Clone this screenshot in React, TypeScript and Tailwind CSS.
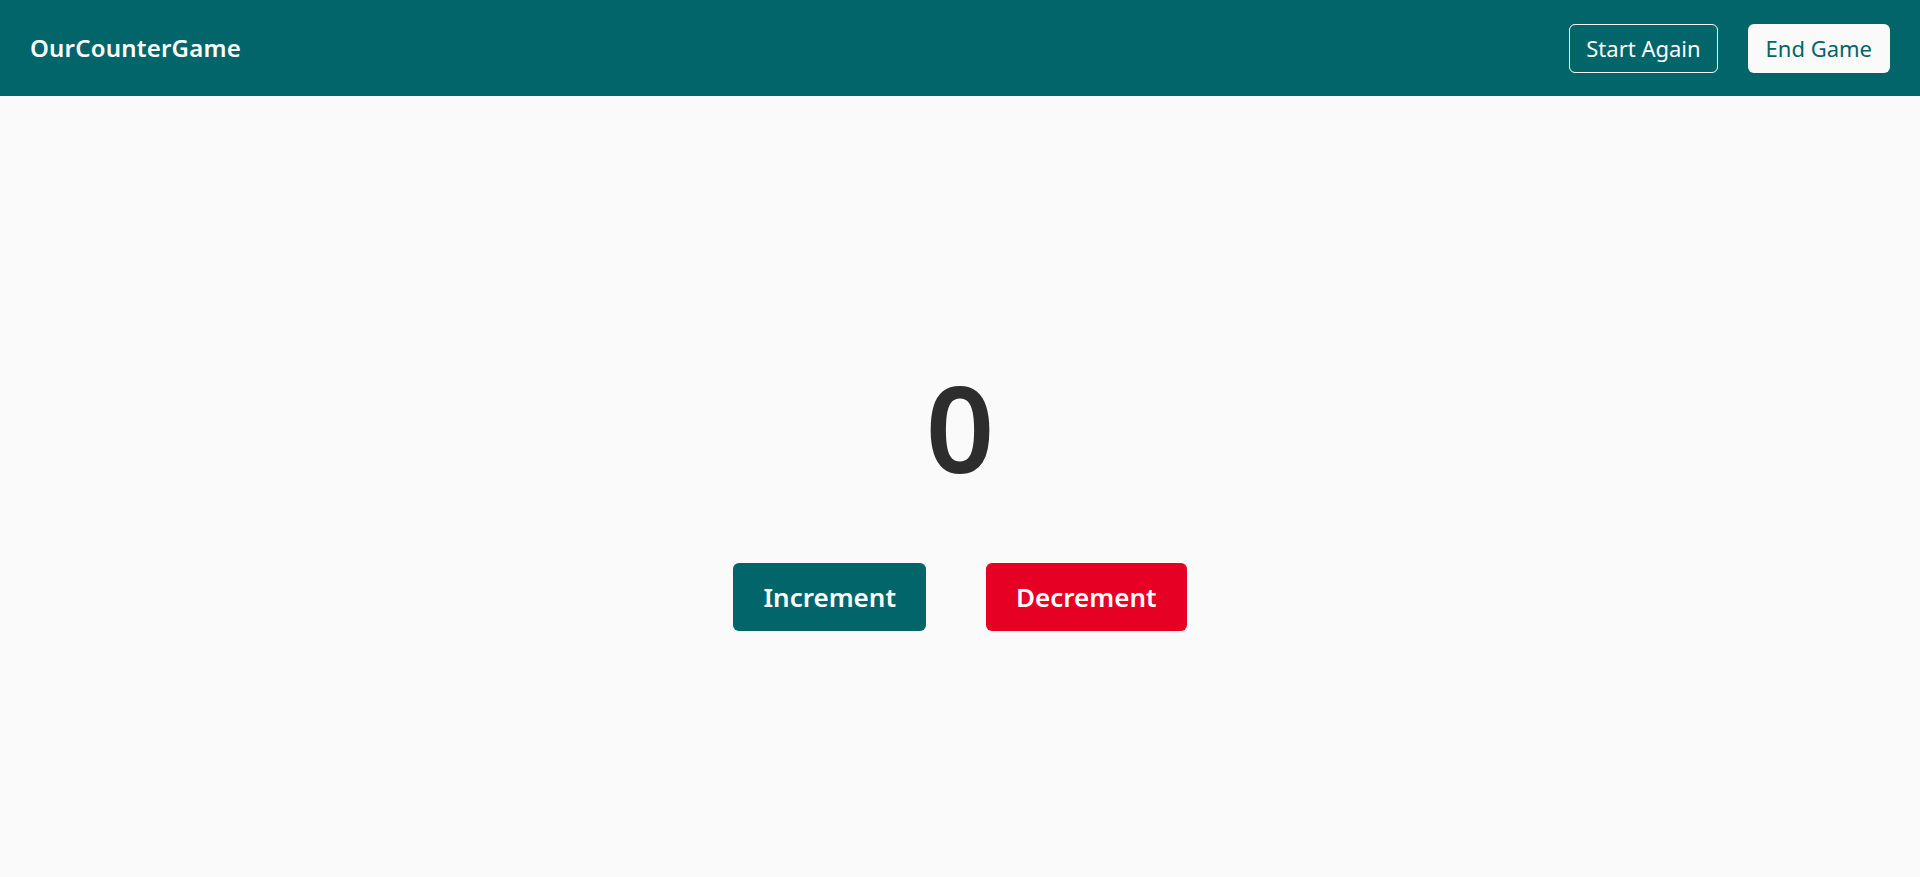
import React, { useState } from "react";

const font = { fontFamily: '"Noto Sans", "Open Sans", sans-serif' };

export default function App() {
  const [count, setCount] = useState(0);

  return (
    <div style={font} className="min-h-screen w-full bg-[#fafafa] flex flex-col">
      {/* Header */}
      <header className="h-[96px] w-full bg-[#02656a] flex items-center justify-between px-[30px]">
        <span className="text-white text-[24px] font-semibold tracking-[0.2px]">OurCounterGame</span>
        <div className="flex items-center gap-[30px]">
          <button
            onClick={() => setCount(0)}
            className="h-[49px] px-[16px] rounded-[6px] border border-white text-white text-[22px] leading-none"
          >
            Start Again
          </button>
          <button className="h-[49px] px-[18px] rounded-[6px] bg-[#fafafa] text-[#02656a] text-[22px] leading-none">
            End Game
          </button>
        </div>
      </header>

      {/* Counter */}
      <main className="flex flex-col items-center pt-[271px]">
        <div className="text-[120px] leading-none font-semibold text-[#2d2d2d]">{count}</div>
        <div className="flex items-center gap-[60px] mt-[76px]">
          <button
            onClick={() => setCount(count + 1)}
            className="h-[68px] px-[30px] rounded-[6px] bg-[#02656a] text-white text-[26px] font-semibold leading-none"
          >
            Increment
          </button>
          <button
            onClick={() => setCount(count - 1)}
            className="h-[68px] px-[30px] rounded-[6px] bg-[#e60023] text-white text-[26px] font-semibold leading-none"
          >
            Decrement
          </button>
        </div>
      </main>
    </div>
  );
}
